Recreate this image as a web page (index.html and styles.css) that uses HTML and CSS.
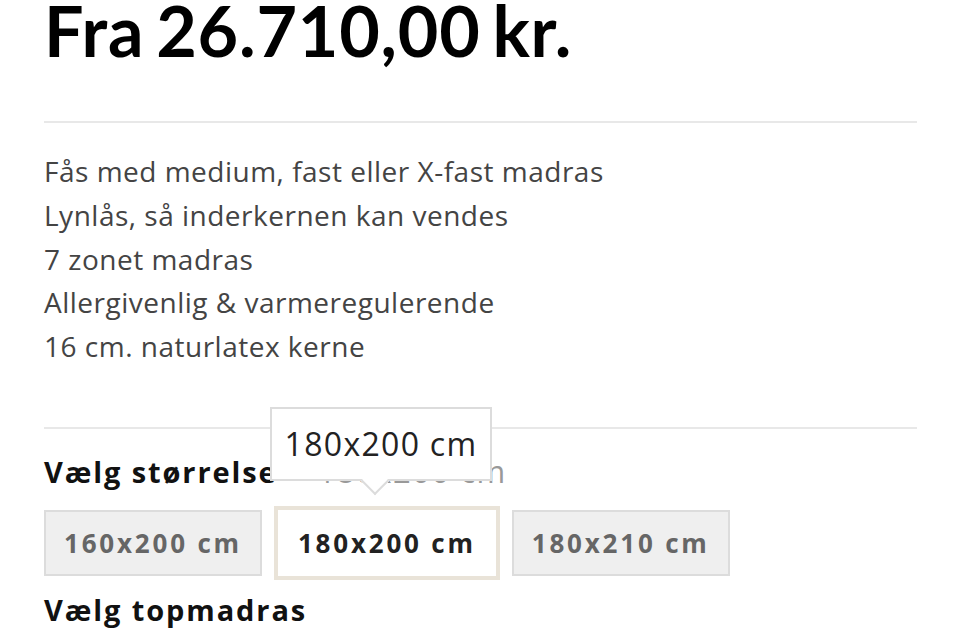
FILE: index.html
```html
<!DOCTYPE html>
<html lang="da">
<head>
<meta charset="utf-8">
<link rel="stylesheet" href="styles.css">
</head>
<body>
<div class="product">
  <div class="price"><span class="from">Fra</span> 26.710,00 kr.</div>
  <hr class="divider">
  <ul class="features">
    <li>Fås med medium, fast eller X-fast madras</li>
    <li>Lynlås, så inderkernen kan vendes</li>
    <li>7 zonet madras</li>
    <li>Allergivenlig &amp; varmeregulerende</li>
    <li>16 cm. naturlatex kerne</li>
  </ul>
  <hr class="divider divider-2">
  <div class="option-group">
    <div class="option-label">
      <span class="label">Vælg størrelse</span>
      <span class="value">180x200 cm</span>
      <div class="tooltip">180x200 cm</div>
    </div>
    <div class="swatches">
      <button class="swatch">160x200 cm</button>
      <button class="swatch selected">180x200 cm</button>
      <button class="swatch">180x210 cm</button>
    </div>
    <div class="option-label next">
      <span class="label">Vælg topmadras</span>
    </div>
  </div>
</div>
</body>
</html>
```
FILE: styles.css
```css
* { box-sizing: border-box; }
html, body { margin: 0; padding: 0; background: #fff; }
body {
  font-family: "Open Sans", "Noto Sans", sans-serif;
  color: #222;
  overflow: hidden;
}
.product {
  padding: 0 43px 0 44px;
}
.price {
  font-family: "Lato", sans-serif;
  font-size: 70px;
  font-weight: 700;
  color: #000;
  line-height: 58px;
  padding-top: 1px;
  letter-spacing: 0.8px;
  word-spacing: -6px;
}
.divider {
  border: 0;
  border-top: 2px solid #e8e8e8;
  margin: 62px 0 0 0;
}
.features {
  list-style: none;
  margin: 0;
  padding: 27px 0 0 0;
  color: #444;
  font-size: 28px;
  line-height: 43.8px;
  letter-spacing: 0.5px;
}
.divider-2 { margin-top: 58px; }
.option-label {
  position: relative;
  display: flex;
  align-items: baseline;
  gap: 40px;
  margin-top: 21px;
}
.label {
  font-size: 29px;
  font-weight: 700;
  color: #111;
  letter-spacing: 1.9px;
}
.value {
  font-size: 31px;
  color: #999;
  letter-spacing: 1.5px;
}
.tooltip {
  position: absolute;
  left: 226px;
  top: -43px;
  width: 222px;
  height: 74px;
  background: #fff;
  border: 2px solid #dcdcdc;
  font-size: 32px;
  color: #222;
  display: flex;
  align-items: center;
  justify-content: center;
  letter-spacing: 1.3px;
}
.tooltip::after {
  content: "";
  position: absolute;
  left: 93px;
  bottom: -12px;
  width: 18px;
  height: 18px;
  background: #fff;
  border-right: 2px solid #dcdcdc;
  border-bottom: 2px solid #dcdcdc;
  transform: rotate(45deg);
}
.swatches {
  display: flex;
  align-items: center;
  gap: 12px;
  margin-top: 14px;
}
.swatch {
  font-family: inherit;
  font-size: 26px;
  font-weight: 700;
  color: #666;
  background: #efefef;
  border: 2px solid #dcdcdc;
  height: 66px;
  padding: 0 18px;
  letter-spacing: 2.8px;
}
.swatch.selected {
  background: #fff;
  color: #222;
  border: 4px solid #e9e3d8;
  height: 74px;
  padding: 0 20px;
}
.option-label.next { margin-top: 10px; }
```
